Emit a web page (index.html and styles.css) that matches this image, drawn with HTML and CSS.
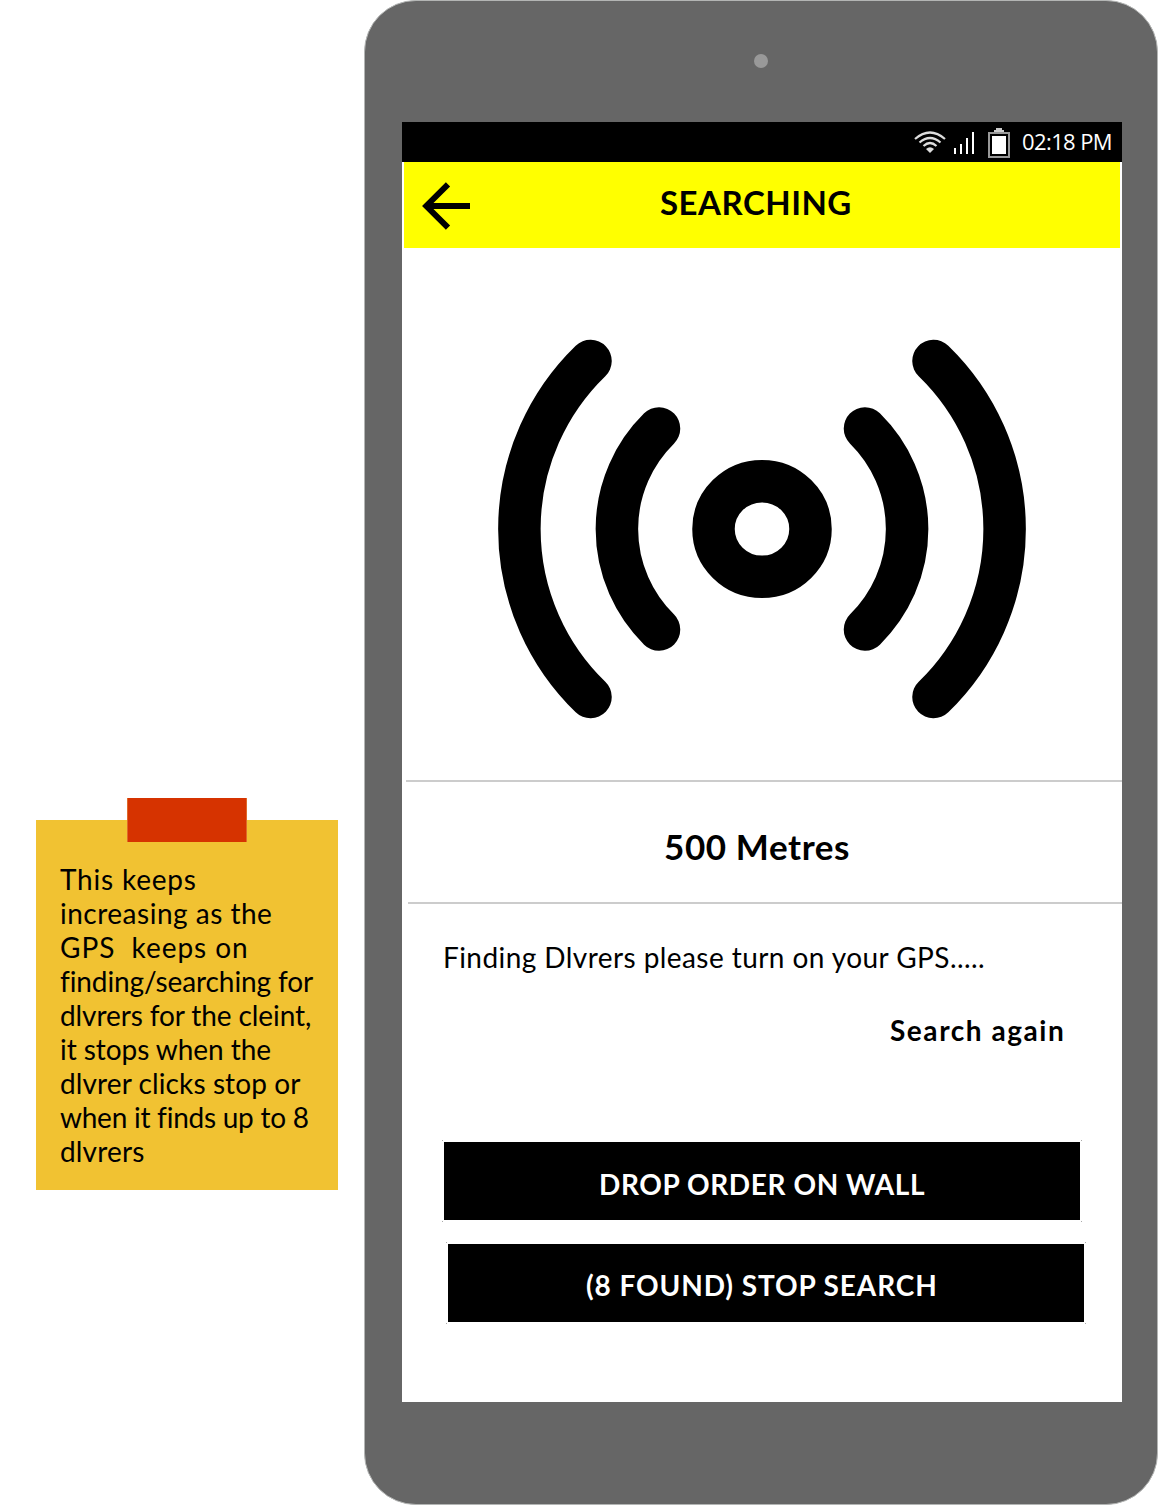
FILE: index.html
```html
<!DOCTYPE html>
<html lang="en">
<head>
<meta charset="utf-8">
<title>Searching</title>
<link rel="stylesheet" href="styles.css">
</head>
<body>
<main class="board">
  <aside class="note">
    <div class="tape"></div>
    <p class="note-text">
      <span class="line l1">This keeps</span>
      <span class="line l2">increasing as the</span>
      <span class="line l3">GPS&nbsp; keeps on</span>
      <span class="line l4">finding/searching for</span>
      <span class="line l5">dlvrers for the cleint,</span>
      <span class="line l6">it stops when the</span>
      <span class="line l7">dlvrer clicks stop or</span>
      <span class="line l8">when it finds up to 8</span>
      <span class="line l9">dlvrers</span>
    </p>
  </aside>
  <section class="phone">
    <div class="camera"></div>
    <div class="screen">
      <div class="status">
        <svg class="wifi" width="32" height="24" viewBox="0 0 32 24" fill="none" stroke="#ddd" stroke-width="2.2">
          <path d="M1 9Q16-4 31 9M5.500 12.500Q16 3.500 26.500 12.500M9.500 16Q16 10 22.500 16"/>
          <path d="M12 19Q16 15.500 20 19L16 23Z" fill="#ddd" stroke="none"/>
        </svg>
        <svg class="bars" width="20" height="22" viewBox="0 0 20 22" fill="#fff">
          <path d="M0 16h2v6H0zM6 12h2v10H6zM12 6h2v16h-2zM18 0h2v22h-2z"/>
        </svg>
        <svg class="battery" width="22" height="30" viewBox="0 0 22 30">
          <path d="M8 0h6v2h2v3H6V2h2z" fill="#ccc"/>
          <path d="M1 5h20v24H1z" fill="none" stroke="#999" stroke-width="2"/>
          <path d="M4 8h14v18H4z" fill="#fff"/>
        </svg>
        <span class="time">02:18 PM</span>
      </div>
      <header class="appbar">
        <svg class="back" width="48" height="48" viewBox="0 0 48 48" fill="none" stroke="#000" stroke-width="6">
          <path d="M26 2.300L4.300 24L26 45.700M6 24H48"/>
        </svg>
        <h1 class="title">SEARCHING</h1>
      </header>
      <div class="radar">
        <svg width="528" height="380" viewBox="498 339 528 380" fill="none" stroke="#000" stroke-width="42.500" stroke-linecap="round">
          <path d="M590.500 361A234 234 0 0 0 590.500 697M659 428.500A141 141 0 0 0 659 629.500M865 428.500A141 141 0 0 1 865 629.500M933.500 361A234 234 0 0 1 933.500 697"/>
          <ellipse cx="762" cy="529" rx="48.500" ry="47.800"/>
        </svg>
      </div>
      <div class="distance">500 Metres</div>
      <div class="details">
        <p class="message">Finding Dlvrers please turn on your GPS.....</p>
        <a class="again">Search again</a>
        <button class="btn wall">DROP ORDER ON WALL</button>
        <button class="btn stop">(8 FOUND) STOP SEARCH</button>
      </div>
    </div>
  </section>
</main>
</body>
</html>
```
FILE: styles.css
```css
* { box-sizing: border-box; }
body { margin: 0; background: #fff; color: #000; font-family: Lato, "Open Sans", sans-serif; }
.board { width: 1160px; height: 1506px; display: flex; align-items: flex-start; overflow: hidden; }
.note { position: relative; width: 302px; height: 370px; margin: 820px 26px 0 36px; padding: 42px 24px 0; background: #f1c232; flex: none; }
.tape { position: absolute; left: 91px; top: -22px; width: 120px; height: 44px; background: #d63300; border: solid #df6a2a; border-width: 0 1px; }
.note-text { margin: 0; font-size: 28px; line-height: 34px; }
.line { display: block; width: max-content; white-space: nowrap; }
.l1 { letter-spacing: 0.8px; }
.l2 { letter-spacing: 0.5px; }
.l3 { letter-spacing: 0.95px; }
.l4 { letter-spacing: -0.1px; }
.l5 { letter-spacing: -0.1px; }
.l6 { letter-spacing: -0.05px; }
.l7 { letter-spacing: 0.1px; }
.l8 { letter-spacing: -0.25px; }
.l9 { letter-spacing: 0.15px; }
.phone { width: 794px; height: 1505px; flex: none; background: #666; border: 1px solid #b3b5b4; border-radius: 52px; padding: 53px 35px 0 37px; }
.camera { width: 14px; height: 14px; border-radius: 50%; background: #999; margin: 0 0 54px 352px; }
.screen { width: 720px; height: 1280px; background: #fff; }
.status { height: 40px; background: #000; color: #fff; display: flex; align-items: flex-start; padding-left: 512px; }
.status svg { flex: none; }
.wifi { margin-top: 8px; }
.bars { margin: 10px 0 0 8px; }
.battery { margin: 6px 0 0 14px; }
.time { margin: 4px 0 0 12px; font: 22px/30px "Open Sans", sans-serif; letter-spacing: -0.6px; white-space: nowrap; }
.appbar { margin: 0 2px; height: 86px; background: #ff0; display: flex; padding-left: 18px; }
.back { margin-top: 20px; flex: none; }
.title { margin: 20px 0 0 190px; font-size: 33px; line-height: 40px; font-weight: 700; letter-spacing: 0.5px; white-space: nowrap; }
.radar { height: 534px; margin-left: 4px; padding: 91px 0 0 92px; border-bottom: 2px solid #ccc; }
.radar svg { display: block; }
.distance { height: 122px; margin-left: 6px; padding: 44px 0 0 256px; border-bottom: 2px solid #ccc; font-size: 35px; line-height: 40px; font-weight: 700; letter-spacing: 0.6px; white-space: nowrap; }
.details { display: flex; flex-direction: column; align-items: flex-start; padding-left: 42px; }
.message { margin: 36px 0 0 -1px; font-size: 28px; line-height: 34px; letter-spacing: 0.43px; white-space: nowrap; }
.again { margin: 39px 0 0 446px; font-size: 28px; line-height: 34px; font-weight: 700; letter-spacing: 1.55px; white-space: nowrap; }
.btn { position: relative; width: 636px; height: 78px; border: 0; padding: 6px 0 0; background: #000; color: #fff; font: 700 28px/34px Lato, "Open Sans", sans-serif; white-space: nowrap; text-align: left; }
/* faint corner marks just outside each button */
.btn::before {
  content: "";
  position: absolute;
  inset: -2px;
  background:
    linear-gradient(#aaa, #aaa) left top / 1px 1px no-repeat,
    linear-gradient(#aaa, #aaa) right top / 1px 1px no-repeat,
    linear-gradient(#aaa, #aaa) left bottom / 1px 1px no-repeat,
    linear-gradient(#aaa, #aaa) right bottom / 1px 1px no-repeat;
}
.wall { margin-top: 95px; padding-left: 155px; letter-spacing: 0.6px; }
.stop { margin: 24px 0 0 4px; padding: 3px 0 0 138px; letter-spacing: 0.9px; }
```
